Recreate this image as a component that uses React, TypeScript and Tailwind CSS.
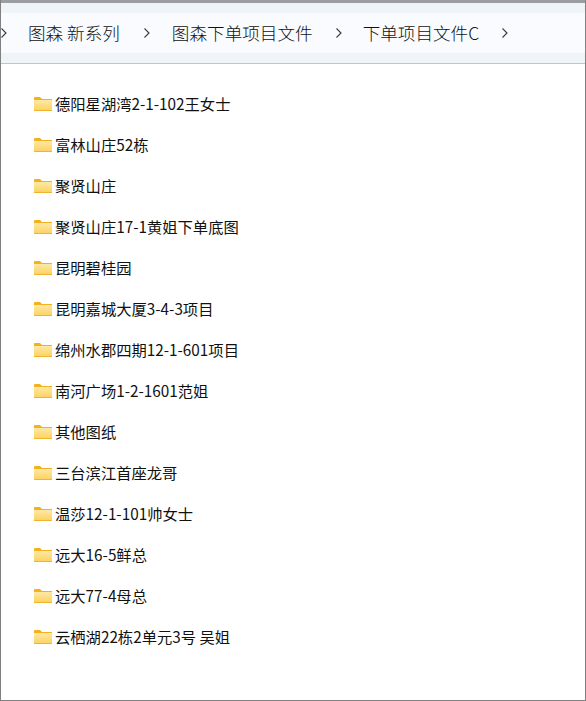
const folders = [
  "德阳星湖湾2-1-102王女士",
  "富林山庄52栋",
  "聚贤山庄",
  "聚贤山庄17-1黄姐下单底图",
  "昆明碧桂园",
  "昆明嘉城大厦3-4-3项目",
  "绵州水郡四期12-1-601项目",
  "南河广场1-2-1601范姐",
  "其他图纸",
  "三台滨江首座龙哥",
  "温莎12-1-101帅女士",
  "远大16-5鲜总",
  "远大77-4母总",
  "云栖湖22栋2单元3号 吴姐",
];

function Chevron() {
  return (
    <svg width="8" height="12" viewBox="0 0 8 12" fill="none" className="shrink-0">
      <path d="M1.5 1.5 L6 6 L1.5 10.5" stroke="#3a3a3a" strokeWidth="1.1" />
    </svg>
  );
}

function FolderIcon() {
  return (
    <svg width="18" height="14" viewBox="0 0 18 14" className="mt-[2px] shrink-0">
      <defs>
        <linearGradient id="folderFill" x1="0" y1="0" x2="0" y2="1">
          <stop offset="0" stopColor="#fde9a6" />
          <stop offset="1" stopColor="#fdd05c" />
        </linearGradient>
      </defs>
      <path d="M0 1 Q0 0 1 0 H6 L8 2 H18 V4 H0 Z" fill="#f6b01e" />
      <rect x="0" y="3" width="18" height="11" fill="url(#folderFill)" />
      <rect x="0" y="13" width="18" height="1" fill="#f0b530" />
    </svg>
  );
}

function Crumb({ label, className }: { label: string; className: string }) {
  return <span className={`text-[17.6px] leading-none font-light whitespace-nowrap text-[#111] ${className}`}>{label}</span>;
}

export default function App() {
  return (
    <div
      className="flex h-[701px] w-[586px] flex-col overflow-hidden border-x border-b border-[#808080] bg-white"
      style={{ fontFamily: '"Noto Sans CJK SC", "Liberation Sans", sans-serif' }}
    >
      <div className="h-[3px] shrink-0 bg-[#9a9da1]" />
      <header className="shrink-0 border-b border-[#b9c6d3] bg-[#eff4f9] py-2.5">
        <div className="flex h-10 items-center bg-[#f9fbfe]">
          <div className="ml-[-1px] flex items-center">
            <Chevron />
          </div>
          <Crumb label="图森 新系列" className="ml-[20px]" />
          <div className="ml-[23px]">
            <Chevron />
          </div>
          <Crumb label="图森下单项目文件" className="ml-[21px]" />
          <div className="ml-[22px]">
            <Chevron />
          </div>
          <Crumb label="下单项目文件C" className="ml-[20px]" />
          <div className="ml-[22px]">
            <Chevron />
          </div>
        </div>
      </header>
      <ul className="flex flex-col gap-[21px] pt-[29px] pl-[33px]">
        {folders.map((name) => (
          <li key={name} className="flex h-5 items-center gap-[3px]">
            <FolderIcon />
            <span className="text-[15.3px] leading-5 whitespace-nowrap text-[#111]">{name}</span>
          </li>
        ))}
      </ul>
    </div>
  );
}
